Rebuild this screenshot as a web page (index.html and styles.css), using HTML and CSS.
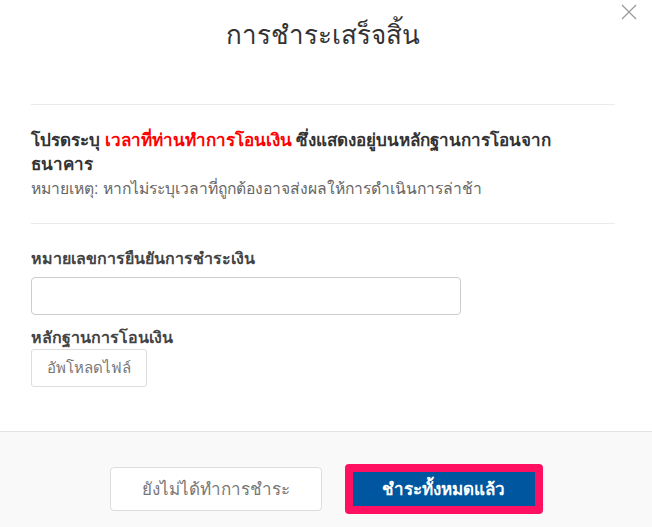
FILE: index.html
```html
<!DOCTYPE HTML>
<html lang="th">
<head>
    <meta charset="UTF-8">
    <meta name="viewport" content="width=device-width, initial-scale=1.0">
    <title>การชำระเสร็จสิ้น</title>
    <link rel="stylesheet" href="styles.css">
</head>
<body>
    <div class="modal">
        <div class="modal-header">
            <h2 class="modal-title">การชำระเสร็จสิ้น</h2>
            <button class="close" aria-label="close">
                <svg width="16" height="16" viewBox="0 0 16 16">
                    <path d="M1 1 L15 15 M15 1 L1 15" stroke="#999" stroke-width="1.2" fill="none"/>
                </svg>
            </button>
        </div>

        <div class="modal-body">
            <div class="notice">
                <p class="notice-main">โปรดระบุ <span class="highlight">เวลาที่ท่านทำการโอนเงิน</span> ซึ่งแสดงอยู่บนหลักฐานการโอนจากธนาคาร</p>
                <p class="notice-note">หมายเหตุ: หากไม่ระบุเวลาที่ถูกต้องอาจส่งผลให้การดำเนินการล่าช้า</p>
            </div>

            <div class="form-group confirm">
                <label for="confirmNo">หมายเลขการยืนยันการชำระเงิน</label>
                <input type="text" id="confirmNo" />
            </div>

            <div class="form-group upload">
                <label>หลักฐานการโอนเงิน</label>
                <button class="upload-btn">อัพโหลดไฟล์</button>
            </div>
        </div>

        <div class="modal-footer">
            <button class="btn btn-default">ยังไม่ได้ทำการชำระ</button>
            <button class="btn btn-primary">ชำระทั้งหมดแล้ว</button>
        </div>
    </div>
</body>
</html>
```

FILE: styles.css
```css
/* Page */
body {
    margin: 0;
    font-family: "Liberation Sans", Arial, sans-serif;
    color: #333;
    background-color: #fff;
}

.modal {
    width: 652px;
    height: 527px;
    display: flex;
    flex-direction: column;
}

/* Header */
.modal-header {
    position: relative;
    height: 105px;
    box-sizing: border-box;
    padding-top: 16px;
    margin: 0 37px 0 31px;
    border-bottom: 1px solid #ebebeb;
}

.modal-title {
    margin: 0;
    text-align: center;
    font-size: 26px;
    font-weight: normal;
    line-height: 38px;
    color: #333;
}

.close {
    position: absolute;
    top: 4px;
    right: -22px;
    padding: 0;
    border: none;
    background: none;
    cursor: pointer;
}

/* Body */
.modal-body {
    flex: 1;
    padding: 0 37px 0 31px;
}

.notice {
    padding: 24px 0 22px;
    border-bottom: 1px solid #ebebeb;
    line-height: 24px;
}

.notice p {
    margin: 0;
}

.notice-main {
    font-size: 17px;
    font-weight: bold;
    color: #333;
    padding-right: 20px;
}

.highlight {
    color: #ff0000;
}

.notice-note {
    font-size: 15.7px;
    color: #666;
}

.form-group {
    display: flex;
    flex-direction: column;
    align-items: flex-start;
}

.confirm {
    margin-top: 24px;
}

label {
    font-size: 16px;
    font-weight: bold;
    color: #444;
    line-height: 22px;
}

.form-group input {
    margin-top: 7px;
    width: 430px;
    height: 38px;
    box-sizing: border-box;
    border: 1px solid #ccc;
    border-radius: 4px;
    font-size: 15px;
    padding: 6px 12px;
}

.upload {
    margin-top: 12px;
}

.upload-btn {
    width: 116px;
    height: 38px;
    border: 1px solid #ddd;
    border-radius: 3px;
    background-color: #fff;
    color: #777;
    font-family: inherit;
    font-size: 15px;
    cursor: pointer;
}

/* Footer */
.modal-footer {
    height: 96px;
    box-sizing: border-box;
    border-top: 1px solid #e3e3e3;
    background-color: #f9f9f9;
    display: flex;
    justify-content: center;
    align-items: center;
    gap: 23px;
    padding: 32px 0 14px;
}

.btn {
    font-family: inherit;
    font-size: 17px;
    cursor: pointer;
}

.btn-default {
    width: 212px;
    height: 44px;
    border: 1px solid #ddd;
    border-radius: 4px;
    background-color: #fff;
    color: #777;
}

.btn-primary {
    width: 198px;
    height: 50px;
    border: 8px solid #ff1060;
    border-radius: 4px;
    background-color: #0057a0;
    color: #fff;
    font-weight: bold;
}
```
